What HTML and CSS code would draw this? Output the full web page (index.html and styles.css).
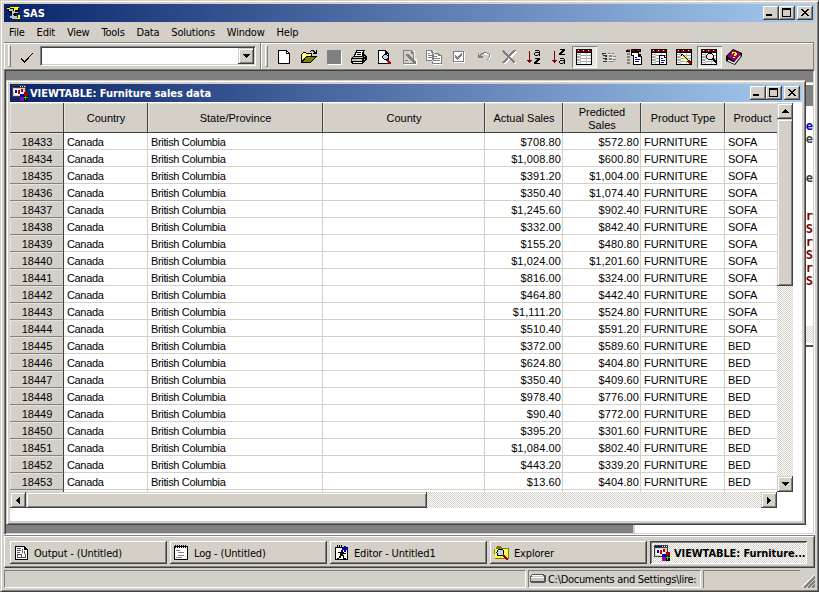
FILE: index.html
```html
<!DOCTYPE html>
<html lang="en">
<head>
    <meta charset="UTF-8">
    <title>SAS</title>
    <link rel="stylesheet" href="styles.css">
</head>
<body>

<div class="app">
    <div class="titlebar">
        <svg class="icon title-icon" width="16" height="16" viewBox="0 0 16 16">
            <path fill="#000" d="M1 2h12v4h-1v3h-2v5H5v-2h2V9H4V7H2V5H1z"/>
            <path fill="#ffff00" d="M4 2h9v1H4zM8 3h4v2H9v1H8zM1 3h3v1H1zM12 10h2v4h-4v-1h2z"/>
            <path fill="#c0c0c0" d="M3 4h4v2H3zM6 6h6v2H8v3H6zM4 11h7v3H6v-1H4z"/>
            <path fill="#000" d="M3 6h2v1H3zM9 6h3v1H9zM7 9h3v1H7z"/>
        </svg>
        <span class="title-text">SAS</span>
        <div class="caption">
            <span class="cap-btn"><svg width="8" height="8"><path d="M0 6h6v2H0z"/></svg></span>
            <span class="cap-btn"><svg width="9" height="9"><path fill-rule="evenodd" d="M0 0h9v9H0zM1 2v6h7V2z"/></svg></span>
            <span class="cap-btn close"><svg width="8" height="7"><path d="M0 0h2v1h1v1h2V1h1V0h2v1H7v1H6v1H5v1h1v1h1v1h1v1H6V6H5V5H3v1H2v1H0V6h1V5h1V4h1V3H2V2H1V1H0z"/></svg></span>
        </div>
    </div>

    <div class="menubar">
        <span>File</span><span>Edit</span><span>View</span><span>Tools</span><span>Data</span><span>Solutions</span><span>Window</span><span>Help</span>
    </div>

    <div class="toolbar">
        <div class="band command-band">
            <i class="grip"></i>
            <svg class="icon check" width="12" height="10" viewBox="0 0 12 10"><path d="M0 5h1v1h1v1h1v1h1V7h1V6h1V5h1V4h1V3h1V2h1V1h1V0h1v1h-1v1h-1v1H9v1H8v2H7v1H6v1H5v1H4v1H3V9H2V8H1V7H0z"/></svg>
            <div class="combo"><span class="combo-btn"><svg width="7" height="4"><path d="M0 0h7v1H6v1H5v1H4v1H3V3H2V2H1V1H0z"/></svg></span></div>
        </div>
        <div class="band tools-band">
            <i class="grip"></i>
            <div class="tools">
                <span class="tool"><svg width="16" height="16"><path d="M2 1h9v1h1v1h1v1h1v11H2z"/><path fill="#fff" d="M3 2h7v3h3v9H3z"/><path fill="#fff" d="M11 3h1v1h-1z"/></svg></span>
                <span class="tool"><svg width="17" height="16"><path d="M10 1h3v1h1v1h1V1h1v4h-4V4h1V3h-1V2h-2v1H9V2h1zM1 4h1V3h3v1h6v3h5v1h-1v1h-1v1h-1v1h-1v1h-1v1h-1v1H0V5h1z"/><path fill="#ffff80" d="M2 4h3v1h5v2H5v1H4v1H3v1H2v1H1V5h1z"/><path fill="#808000" d="M5 8h9v1h-1v1h-1v1h-1v1h-1v1H2v-1h1v-1h1V9h1z"/></svg></span>
                <span class="tool"><svg width="16" height="16"><path fill="#fff" d="M2 2h14v14H2z"/><path fill="#808080" d="M1 1h14v14H1z"/></svg></span>
                <span class="tool"><svg width="16" height="16"><path d="M5 1h9v1h-1v3h1v1h1v1h1v4h-1v1h-1v1h-1v1h-1v1H1v-1H0V9h1V8h1V7h1V5h1V3h1z"/><path fill="#fff" d="M6 2h6v1h-1v4H4V6h1V4h1z"/><path fill="#000" d="M6 3h4v1H6zM6 5h4v1H6z"/><path fill="#c0c0c0" d="M2 8h10v1H2zM1 10h10v2H1zM13 7h1v1h-1zM13 10h1v1h-1z"/><path fill="#ff0" d="M7 10h3v1H7z"/><path fill="#fff" d="M2 13h9v1H2z"/></svg></span>
                <span class="tool"><svg width="16" height="16"><path d="M2 1h8v1h1v1h1v1h1v11H2z"/><path fill="#fff" d="M3 2h6v3h3v9H3z"/><path d="M8 5h3v1h1v4h-1v1H8v-1H7V9H6V7h1V6h1z"/><path fill="#c0d8f0" d="M8 6h3v1h1v2h-1v1H8V9H7V7h1z"/><path fill="#a00000" d="M11 10h1v1h1v1h1v1h1v2h-2v-1h-1v-1h-1v-1h-1v-1h1z"/></svg></span>
                <span class="tool"><svg width="16" height="16"><path fill="#fff" d="M3 2h11v14H3zM10 10h6v6h-4z"/><path fill="#d4d0c8" d="M3 2h9v12H3z"/><path fill="#808080" fill-rule="evenodd" d="M2 1h9v1h1v1h1v12H2zM3 2v12h9V5h-2V2z"/><path fill="#808080" d="M5 5h3v1h1v1h1v1h1v1h1v1h1v1h1v1h1v3h-2v-1h-1v-1h-1v-1h-1v-1H9v-1H8V9H7V8H6V7H5zM4 11h3v1H4z"/></svg></span>
                <span class="tool"><svg width="16" height="16"><path fill="#fff" d="M1 2h8v4h7v10H7v-4H1z"/><path fill="#808080" fill-rule="evenodd" d="M0 1h6v1h1v1h1v9H0zM1 2v9h6V4H5V2zM6 4h7v1h1v1h2v9H6zM7 5v9h8V7h-3V5z"/><path fill="#808080" d="M2 4h2v1H2zM2 6h4v1H2zM2 8h4v1H2zM8 7h3v1H8zM8 9h6v1H8zM8 11h6v1H8z"/></svg></span>
                <span class="tool"><svg width="16" height="16"><path fill="#fff" d="M3 3h11v11H3z"/><path fill="#808080" fill-rule="evenodd" d="M2 2h11v11H2zM3 3v9h9V3z"/><path fill="#808080" d="M10 4h1v3h-1v1H9v1H8v1H7v1H6v-1H5V9H4V6h1v1h1v1h1V7h1V6h1V5h1z"/></svg></span>
                <span class="tool"><svg width="16" height="16"><path fill="#fff" d="M3 5h1v3h3v1H3zM8 4h4v1h2v1h1v3h-1v2h-1V6H9z"/><path fill="#808080" d="M2 4h1v2h1V5h1V4h2V3h4v1h2v1h1v3h-1v1h-1v2h-1v-1h1V8h1V5h-2V4H8v1H6v1H5v1h2v2H2z"/></svg></span>
                <span class="tool"><svg width="16" height="16"><path fill="none" stroke="#fff" stroke-width="2" d="M3 3l12 12M15 3L3 15"/><path fill="none" stroke="#808080" stroke-width="2" d="M2 2l12 12M14 1L2 14"/></svg></span>
                <span class="tool"><svg width="16" height="16"><path fill="#800000" d="M3 2h1v9h2v1H5v1H4v1H3v-1H2v-1H1v-1h2z"/><path d="M9 1h4v1h1v5h-1V6h-1v1H9V6H8V4h1V3h4V2H9zM9 4v2h3V5h1V4zM9 9h5v2h-1v1h-1v1h-1v1h3v1H8v-2h1v-1h1v-1h1v-1H9z"/></svg></span>
                <span class="tool"><svg width="16" height="16"><path fill="#800000" d="M3 2h1v9h2v1H5v1H4v1H3v-1H2v-1H1v-1h2z"/><path d="M9 0h5v2h-1v1h-1v1h-1v1h3v1H8V4h1V3h1V2h1V1H9zM9 9h4v1h1v5h-1v-1h-1v1H9v-1H8v-2h1v-1h4v-1H9zM9 12v2h3v-1h1v-1z"/></svg></span>
                <span class="tool pressed"><svg width="16" height="16"><use href="#sheet"/></svg></span>
                <span class="tool"><svg width="16" height="16"><path fill="#333" d="M1 4h4v1H1zM2 6h4v1H2zM2 9h4v1H2zM2 12h4v1H2zM1 5h1v1H1zM4 7h2v1H4zM4 10h2v1H4z"/><path fill="#808080" d="M7 4h3v1H7zM8 6h3v2H8zM8 9h3v2H8zM8 12h5v1H8zM11 4h2v1h-2zM12 7h3v1h-3zM12 10h3v1h-3z"/><path fill="#fff" d="M7 5h4v1H7zM8 8h6v1H8zM8 11h4v1H8z"/></svg></span>
                <span class="tool"><svg width="17" height="16"><path fill="#808080" d="M1 0h3v1H1zM1 4h3v2H1zM1 7h3v2H1zM1 10h3v2H1zM1 13h3v2H1z"/><path d="M5 0h10v3H5zM0 1h4v2H0z"/><path fill="#900000" d="M1 1h3v1H1zM6 1h3v1H6zM11 1h3v1h-3z"/><path d="M5 3h8v2h2v2h1v9H7V7H5z"/><path fill="#fff" d="M6 4h6v2H6zM8 6h4v2h3v7H8z"/><path fill="#00c" d="M9 8h2v1H9zM9 10h5v1H9zM9 12h4v1H9z"/></svg></span>
                <span class="tool"><svg width="17" height="16"><use href="#sheet"/><path d="M8 6h6v2h2v8H8z"/><path fill="#fff" d="M9 7h4v2h2v6H9z"/><path fill="#00c" d="M10 9h2v1h-2zM10 11h4v1h-4zM10 13h3v1h-3z"/></svg></span>
                <span class="tool"><svg width="16" height="16"><use href="#sheet"/><path d="M5 5h2v1h1v1h1v1h1v1h1v1h1v1h2v1h1v3h-2v-1h-1v-1h-1v-1h-1v-1H9v-1H8V9H7V8H6V7H5z"/><path fill="#ff0" d="M6 6h1v1h1v1h1v1h1v1h1v1h1v1h-2v-1H9v-1H8V9H7V8H6z"/><path fill="#c00000" d="M12 12h2v1h1v2h-2v-1h-1z"/></svg></span>
                <span class="tool pressed"><svg width="16" height="16"><use href="#sheet"/><path d="M7 4h4v1h1v1h1v4h1v1h1v1h1v3h-1v-1h-1v-1h-1v-1h-1v-1H7v-1H6V9H5V6h1V5h1z"/><path fill="#e8e8e8" d="M7 5h4v1h1v3h-1v1H7V9H6V6h1z"/></svg></span>
                <span class="tool"><svg class="smooth" width="17" height="16"><path d="M0 7l7-7 9 4v3l-7 9L0 12z"/><path fill="#fff" d="M2 10.500l6 3 6.500-8v2L8.500 15 2 12z"/><path fill="#a0007c" d="M1.500 7.500L7 1l7.500 3.500L8.500 12z"/><path fill="#ff0" d="M6 3h4v1h1v2h-1v1H8V5h1V4H7v1H6zM7 8h2v1H7z"/></svg></span>
            </div>
        </div>
    </div>

    <div class="mdi">
        <!-- windows partly hidden behind the table -->
        <div class="back-window">
            <div class="back-title"></div>
            <div class="back-text">
                <b class="blue l1">ce</b><b class="l2">be</b><b class="l3">be</b>
                <b class="red l4">er</b><b class="red l5">IS</b><b class="red l6">er</b><b class="red l7">IS</b><b class="red l8">er</b><b class="red l9">IS</b>
            </div>
            <div class="back-scroll"></div>
        </div>
        <div class="back-lower"></div>

        <div class="child">
            <div class="titlebar">
                <svg class="icon title-icon" width="17" height="17" viewBox="0 0 17 17"><use href="#viewtable"/></svg>
                <span class="title-text">VIEWTABLE: Furniture sales data</span>
                <div class="caption">
                    <span class="cap-btn"><svg width="8" height="8"><path d="M0 6h6v2H0z"/></svg></span>
                    <span class="cap-btn"><svg width="9" height="9"><path fill-rule="evenodd" d="M0 0h9v9H0zM1 2v6h7V2z"/></svg></span>
                    <span class="cap-btn close"><svg width="8" height="7"><path d="M0 0h2v1h1v1h2V1h1V0h2v1H7v1H6v1H5v1h1v1h1v1h1v1H6V6H5V5H3v1H2v1H0V6h1V5h1V4h1V3H2V2H1V1H0z"/></svg></span>
                </div>
            </div>
            <div class="view">
                <div class="view-main">
                    <div class="table-wrap">
                        <table>
                            <colgroup>
                                <col class="c-num"><col class="c-country"><col class="c-state"><col class="c-county"><col class="c-actual"><col class="c-pred"><col class="c-type"><col class="c-product">
                            </colgroup>
                            <thead>
                                <tr><th></th><th>Country</th><th>State/Province</th><th>County</th><th>Actual Sales</th><th>Predicted Sales</th><th>Product Type</th><th>Product</th></tr>
                            </thead>
                            <tbody id="rows"></tbody>
                        </table>
                    </div>
                    <div class="vscroll">
                        <span class="sb-btn"><svg width="7" height="4"><path d="M3 0h1v1h1v1h1v1h1v1H0V3h1V2h1V1h1z"/></svg></span>
                        <span class="thumb"></span>
                        <span class="sb-btn end"><svg width="7" height="4"><path d="M0 0h7v1H6v1H5v1H4v1H3V3H2V2H1V1H0z"/></svg></span>
                    </div>
                </div>
                <div class="hscroll">
                    <span class="sb-btn"><svg width="4" height="7"><path d="M3 0h1v7H3V6H2V5H1V4H0V3h1V2h1V1h1z"/></svg></span>
                    <span class="thumb"></span>
                    <span class="sb-btn end"><svg width="4" height="7"><path d="M0 0h1v1h1v1h1v1h1v1H3v1H2v1H1v1H0z"/></svg></span>
                </div>
            </div>
        </div>
    </div>

    <div class="taskbar">
        <div class="task">
            <svg class="icon" width="17" height="16"><path fill-rule="evenodd" d="M1 1h10v1h1v1h1v1h1v11H1zM2 2v12h11V5h-3V2z"/><path fill="#fff" d="M2 2h8v3h3v9H2z"/><path fill="#555" d="M3 3h4v1H3zM3 5h4v1H3zM3 7h3v1H3zM8 4h1v4H8zM10 6h1v3h-1zM3 9h4v1H3zM3 12h9v1H3zM3 9h1v4H3zM7 9h1v4H7zM11 9h1v4h-1z"/></svg>
            <span>Output - (Untitled)</span>
        </div>
        <div class="task">
            <svg class="icon" width="17" height="16"><path d="M0 1h14v14H0z"/><path fill="#fff" d="M1 2h12v12H1z"/><path d="M1 0h1v3H1zM3 0h1v3H3zM5 0h1v3H5zM7 0h1v3H7zM9 0h1v3H9zM11 0h1v3h-1z"/><path fill="#808080" d="M2 5h4v1H2zM4 7h6v1H4zM4 10h6v1H4zM2 12h6v1H2z"/></svg>
            <span>Log - (Untitled)</span>
        </div>
        <div class="task">
            <svg class="icon" width="17" height="16"><path d="M1 2h13v13H1z"/><path fill="#fff" d="M2 3h11v11H2z"/><path d="M3 0h1v3H3zM5 0h1v3H5zM7 0h1v3H7zM7 5h2v2h1v1h2v1H9v1h1v3h2v1H9v-3H7v2H5v1H3v-1h2v-2h1V8H4V7h3z"/><path fill="#0000c0" d="M10 1h2v2h2v2h-2v2h-2V5H8V3h2z"/></svg>
            <span>Editor - Untitled1</span>
        </div>
        <div class="task">
            <svg class="icon" width="17" height="17"><path fill="#808000" d="M0 4h2V2h1V1h4v1h1v1h7v11H1z"/><path fill="#ffff40" d="M1 4h13v9H1z"/><circle cx="6.5" cy="7.5" r="3.500" fill="#b8d8f8" stroke="#000"/><path stroke="#900000" stroke-width="2" d="M9 10l5 5"/></svg>
            <span>Explorer</span>
        </div>
        <div class="task active">
            <svg class="icon" width="17" height="17" viewBox="0 0 17 17">
                <g id="viewtable">
                    <path fill="#404040" d="M0 0h14v12H0z"/><path fill="#d4d0c8" d="M1 3h12v8H1z"/><path fill="#000080" d="M1 1h12v1H1z"/><path fill="#fff" d="M2 4h9v6H2zM8 1h1v1H8zM10 1h1v1h-1zM12 1h1v1h-1z"/><path fill="#000080" d="M3 5h2v3H3z"/><path fill="#c00000" d="M6 5h2v4H6zM9 4h2v3H9z"/>
                    <path fill="#a00000" d="M12 7h4v4h-4z"/><path fill="#0000c0" d="M8 9h4v3H8z"/><path fill="#a000a0" d="M8 12h4v4H8z"/><path d="M12 11h4v5h-4z"/><path fill="#00e000" d="M13 11h1v4h-1zM12 12h4v1h-4z"/>
                </g>
            </svg>
            <span>VIEWTABLE: Furniture...</span>
        </div>
    </div>

    <div class="statusbar">
        <div class="cell message"></div>
        <div class="cell folder">
            <svg class="icon" width="16" height="10"><path fill="#555" d="M2 0h12v1h2v7h-1v1H1V8H0V2h1V1h1z"/><path fill="#fff" d="M2 1h11v1H2zM1 3h13v1H1z"/><path fill="#c8c8c8" d="M2 2h12v1H2zM1 4h13v3H1z"/></svg>
            <span>C:\Documents and Settings\lire:</span>
        </div>
        <div class="cell last"></div>
        <svg class="sizer" width="13" height="13"><path stroke="#fff" d="M0 12L12 0M4 12l8-8M8 12l4-4"/><path stroke="#808080" stroke-width="2" d="M2 13L13 2M6 13l7-7M10 13l3-3"/></svg>
    </div>
</div>

<!-- shared toolbar drawing -->
<svg class="defs" width="0" height="0">
    <defs>
        <g id="sheet">
            <path d="M0 0h16v16H0z"/>
            <path fill="#900000" d="M1 1h3v2H1zM5 1h5v2H5zM11 1h4v2h-4z"/>
            <path fill="#fff" d="M2 1h1v1H2zM7 1h1v1H7zM12 1h1v1h-1zM1 4h14v11H1z"/>
            <path fill="#a8a8a8" d="M1 5h3v1H1zM1 7h3v2H1zM1 10h3v2H1zM1 13h3v1H1zM5 6h10v1H5zM5 9h10v1H5zM5 12h10v1H5z"/>
            <path fill="#c8c8c8" d="M4 4h1v11H4zM10 4h1v11h-1z"/>
        </g>
    </defs>
</svg>

<script src="script.js"></script>
</body>
</html>
```
FILE: styles.css
```css
body {
    margin: 0;
    overflow: hidden;
    font-family: "DejaVu Sans Condensed", "DejaVu Sans", sans-serif;
    font-stretch: condensed;
    font-size: 11px;
    letter-spacing: -0.22px;
    color: #000;
    background: #d4d0c8;
}

svg {
    display: block;
    flex: none;
    shape-rendering: crispEdges;
}

svg.smooth {
    shape-rendering: auto;
}

.app {
    box-sizing: border-box;
    width: 819px;
    height: 592px;
    border: 1px solid;
    border-color: #d4d0c8 #404040 #404040 #d4d0c8;
    box-shadow: inset 1px 1px #fff, inset -1px -1px #808080;
    padding: 3px;
    display: flex;
    flex-direction: column;
}

/* Title bars */
.titlebar {
    flex: none;
    height: 18px;
    display: flex;
    align-items: center;
    background: linear-gradient(to right, #0a246a, #a6caf0);
    color: #fff;
    font-weight: bold;
}

.title-icon {
    margin: 0 1px 0 2px;
}

.title-text {
    letter-spacing: -0.07px;
}

.caption {
    margin-left: auto;
    display: flex;
    padding-right: 2px;
}

.cap-btn {
    box-sizing: border-box;
    width: 16px;
    height: 14px;
    padding: 2px 0 0 3px;
    background: #d4d0c8;
    box-shadow: inset -1px -1px #404040, inset 1px 1px #fff, inset -2px -2px #808080;
}

.cap-btn.close {
    margin-left: 2px;
    padding: 3px 0 0 4px;
}

.menubar {
    flex: none;
    height: 20px;
    display: flex;
    align-items: center;
    gap: 12px;
    padding-left: 5px;
}

/* Toolbar */
.toolbar {
    flex: none;
    height: 27px;
    box-sizing: border-box;
    border-top: 1px solid #808080;
    margin-right: 1px;
    display: flex;
}

.band {
    display: flex;
    align-items: center;
    box-shadow: inset 1px 1px #fff;
    box-sizing: border-box;
    padding-left: 4px;
}

.command-band {
    width: 257px;
    border-right: 1px solid #808080;
}

.tools-band {
    flex: 1;
    border-right: 1px solid #808080;
}

.grip {
    flex: none;
    width: 1px;
    height: 20px;
    background: #d4d0c8;
    border: 1px solid;
    border-color: #fff #808080 #808080 #fff;
}

.check {
    margin: 3px 7px 0 10px;
}

.combo {
    box-sizing: border-box;
    width: 216px;
    height: 20px;
    background: #fff;
    border: 1px solid;
    border-color: #808080 #fff #fff #808080;
    box-shadow: inset 1px 1px #404040, inset -1px -1px #d4d0c8;
    display: flex;
    justify-content: flex-end;
    padding: 1px;
}

.combo-btn,
.sb-btn {
    box-sizing: border-box;
    width: 16px;
    height: 16px;
    flex: none;
    display: flex;
    align-items: center;
    justify-content: center;
    background: #d4d0c8;
    box-shadow: inset -1px -1px #404040, inset 1px 1px #d4d0c8, inset 2px 2px #fff, inset -2px -2px #808080;
}

.tools {
    display: flex;
    margin: 2px 0 0 4px;
}

.tool {
    box-sizing: border-box;
    width: 25px;
    height: 22px;
    padding: 3px 0 0 4px;
}

.tool.pressed {
    background: #e9e7e3;
    box-shadow: inset 1px 1px #808080, inset -1px -1px #fff;
}

/* Client area */
.mdi {
    position: relative;
    flex: none;
    box-sizing: border-box;
    height: 466px;
    width: 811px;
    border: 1px solid;
    border-color: #808080 #fff #fff #808080;
    box-shadow: inset 1px 1px #404040, inset -1px -1px #d4d0c8;
    background: #808080;
    overflow: hidden;
}

.back-window {
    position: absolute;
    left: 795px;
    top: 12px;
    width: 13px;
    height: 262px;
    border-top: 1px solid #d4d0c8;
    background: #fff;
    border-bottom: 2px solid #505050;
}

.back-title {
    margin-top: 2px;
    height: 21px;
    background: #808080;
}

.back-text {
    position: relative;
    height: 220px;
    overflow: hidden;
    font-family: "DejaVu Sans Mono", monospace;
    font-size: 12px;
    line-height: 13px;
    color: #404040;
}

.back-text b {
    position: absolute;
    right: 0;
    letter-spacing: 0;
}

.blue { color: #0000c0; }
.red { color: #800000; }
.l1 { top: 14px; }
.l2 { top: 27px; }
.l3 { top: 66px; }
.l4 { top: 104px; }
.l5 { top: 117px; }
.l6 { top: 130px; }
.l7 { top: 143px; }
.l8 { top: 156px; }
.l9 { top: 169px; }

.back-scroll {
    height: 17px;
    background: repeating-conic-gradient(#fff 0 25%, #d4d0c8 0 50%) 0 0 / 2px 2px;
}

.back-lower {
    position: absolute;
    left: 628px;
    top: 277px;
    width: 178px;
    height: 186px;
    border-left: 2px solid #d4d0c8;
    background: #fff;
}

.child {
    position: absolute;
    left: 1px;
    top: 10px;
    box-sizing: border-box;
    width: 800px;
    height: 445px;
    border: 1px solid;
    border-color: #d4d0c8 #404040 #404040 #d4d0c8;
    box-shadow: inset 1px 1px #fff, inset -1px -1px #808080;
    background: #d4d0c8;
    padding: 3px;
}

.view {
    height: 419px;
    background: #fff;
    padding-top: 1px;
    box-sizing: border-box;
}

.view-main {
    display: flex;
    width: 783px;
    height: 389px;
}

.table-wrap {
    width: 767px;
    overflow: hidden;
}

table {
    table-layout: fixed;
    width: 767px;
    border-collapse: separate;
    border-spacing: 0;
    font-family: "Liberation Sans", Arial, sans-serif;
    font-size: 11px;
    letter-spacing: 0;
}

.c-num { width: 54px; }
.c-country { width: 84px; }
.c-state { width: 175px; }
.c-county { width: 162px; }
.c-actual,
.c-pred { width: 78px; }
.c-type { width: 84px; }
.c-product { width: 52px; }

th,
td {
    box-sizing: border-box;
    overflow: hidden;
    white-space: nowrap;
}

th {
    height: 30px;
    padding: 2px 2px 0 3px;
    font-weight: normal;
    line-height: 13px;
    white-space: normal;
    background: #d4d0c8;
    border-right: 1px solid #404040;
    border-bottom: 1px solid #404040;
    box-shadow: inset 1px 1px #e6e3dd;
}

th:last-child {
    border-right: none;
    padding-right: 0;
}

td {
    height: 17px;
    padding: 2px 2px 0 3px;
    line-height: 14px;
    border-right: 1px solid #d4d0c8;
    border-bottom: 1px solid #d4d0c8;
    background: #fff;
}

td:first-child {
    text-align: center;
    background: #d4d0c8;
    border-right-color: #404040;
    border-bottom-color: #808080;
    box-shadow: inset 1px 1px #e6e3dd;
}

td:last-child {
    border-right: none;
}

td.place {
    letter-spacing: -0.35px;
}

td.money {
    text-align: right;
    padding-right: 1px;
    letter-spacing: 0.1px;
}

/* Scroll bars */
.vscroll,
.hscroll {
    display: flex;
    background: repeating-conic-gradient(#fff 0 25%, #d4d0c8 0 50%) 0 0 / 2px 2px;
}

.vscroll {
    width: 16px;
    flex-direction: column;
}

.hscroll {
    width: 767px;
    height: 16px;
}

.thumb {
    background: #d4d0c8;
    box-shadow: inset -1px -1px #404040, inset 1px 1px #d4d0c8, inset 2px 2px #fff, inset -2px -2px #808080;
}

.vscroll .thumb {
    height: 167px;
}

.hscroll .thumb {
    width: 401px;
}

.vscroll .end {
    margin-top: auto;
}

.hscroll .end {
    margin-left: auto;
}

/* Window bar */
.taskbar {
    flex: none;
    box-sizing: border-box;
    height: 33px;
    display: flex;
    gap: 3px;
    padding: 5px 0 0 5px;
    border: 1px solid;
    border-color: #808080 #404040 #404040 #fff;
    box-shadow: inset 0 1px #fff, inset -1px -1px #808080;
}

.task {
    flex: none;
    box-sizing: border-box;
    width: 157px;
    height: 23px;
    display: flex;
    align-items: center;
    gap: 3px;
    padding: 1px 0 0 4px;
    white-space: nowrap;
    letter-spacing: -0.17px;
    box-shadow: inset -1px -1px #404040, inset 1px 1px #fff, inset -2px -2px #808080;
}

.task.active {
    font-weight: bold;
    letter-spacing: -0.1px;
    background: repeating-conic-gradient(#fff 0 25%, #d4d0c8 0 50%) 0 0 / 2px 2px;
    box-shadow: inset 1px 1px #404040, inset -1px -1px #fff, inset 2px 2px #808080;
}

.statusbar {
    flex: none;
    height: 20px;
    box-sizing: border-box;
    padding-top: 2px;
    display: flex;
    gap: 2px;
}

.cell {
    flex: none;
    box-sizing: border-box;
    height: 18px;
    border: 1px solid;
    border-color: #808080 #fff #fff #808080;
    display: flex;
    align-items: center;
    white-space: nowrap;
}

.message { width: 522px; }

.folder {
    width: 173px;
    padding-left: 1px;
    gap: 2px;
    letter-spacing: -0.3px;
}

.last {
    width: 97px;
    border-right: none;
    border-bottom: none;
}

.sizer {
    margin-top: 5px;
}

.defs {
    position: absolute;
}
```
FILE: script.js
```js
// Rows shown in the table: number, actual sales, predicted sales, product
const sales = [
    [18433, '$708.80', '$572.80', 'SOFA'],
    [18434, '$1,008.80', '$600.80', 'SOFA'],
    [18435, '$391.20', '$1,004.00', 'SOFA'],
    [18436, '$350.40', '$1,074.40', 'SOFA'],
    [18437, '$1,245.60', '$902.40', 'SOFA'],
    [18438, '$332.00', '$842.40', 'SOFA'],
    [18439, '$155.20', '$480.80', 'SOFA'],
    [18440, '$1,024.00', '$1,201.60', 'SOFA'],
    [18441, '$816.00', '$324.00', 'SOFA'],
    [18442, '$464.80', '$442.40', 'SOFA'],
    [18443, '$1,111.20', '$524.80', 'SOFA'],
    [18444, '$510.40', '$591.20', 'SOFA'],
    [18445, '$372.00', '$589.60', 'BED'],
    [18446, '$624.80', '$404.80', 'BED'],
    [18447, '$350.40', '$409.60', 'BED'],
    [18448, '$978.40', '$776.00', 'BED'],
    [18449, '$90.40', '$772.00', 'BED'],
    [18450, '$395.20', '$301.60', 'BED'],
    [18451, '$1,084.00', '$802.40', 'BED'],
    [18452, '$443.20', '$339.20', 'BED'],
    [18453, '$13.60', '$404.80', 'BED'],
    ['', '', '', '']
];

document.getElementById('rows').innerHTML = sales.map(([num, actual, predicted, product]) => `
    <tr>
        <td>${num}</td>
        <td class="place">${num && 'Canada'}</td>
        <td class="place">${num && 'British Columbia'}</td>
        <td></td>
        <td class="money">${actual}</td>
        <td class="money">${predicted}</td>
        <td>${num && 'FURNITURE'}</td>
        <td>${product}</td>
    </tr>`).join('');
```
